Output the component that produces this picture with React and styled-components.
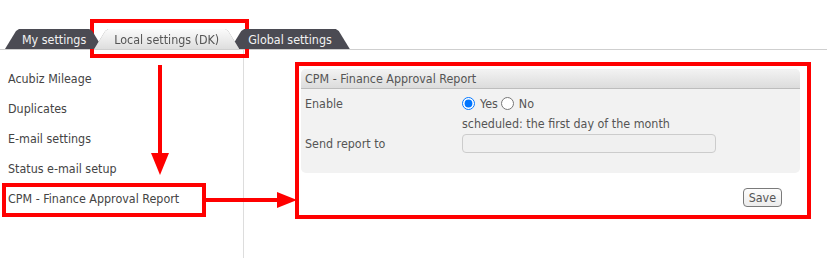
import React from "react";
import styled, { createGlobalStyle, css } from "styled-components";

const GlobalStyle = createGlobalStyle`
  body {
    margin: 0;
    background: #fff;
    font-family: "DejaVu Sans Condensed", "DejaVu Sans", Verdana, sans-serif;
    font-size: 12.4px;
    color: #444;
  }
`;

const Page = styled.div`
  position: relative;
  width: 827px;
  height: 258px;
  overflow: hidden;
`;

const TabStrip = styled.div`
  display: flex;
  padding: 29px 0 0 5px;
  border-bottom: 1px solid #cfcfcf;
`;

const Tab = styled.div`
  position: relative;
  height: 20px;
  line-height: 21px;
  padding: 0 ${(p) => p.$pad || 17}px;
  margin-left: -9px;
  color: #f2f2f2;
  white-space: nowrap;
  cursor: pointer;
  z-index: 1;

  &:first-child {
    margin-left: 0;
  }

  &::before {
    content: "";
    position: absolute;
    inset: 0;
    z-index: -1;
    background: #4b4b53;
    clip-path: polygon(0 100%, 11px 2px, 14px 0, calc(100% - 14px) 0, calc(100% - 11px) 2px, 100% 100%);
  }

  ${(p) =>
    p.$active &&
    css`
      z-index: 2;
      color: #555;
      filter: drop-shadow(0 0 0.6px #8a8a8a);
      &::before {
        background: linear-gradient(#fbfbfb, #dedede);
      }
    `}
`;

const Body = styled.div`
  display: grid;
  grid-template-columns: 244px 1fr;
  height: 208px;
`;

const Sidebar = styled.nav`
  border-right: 1px solid #dddddd;
  padding-top: 14px;
`;

const NavItem = styled.div`
  height: 30px;
  line-height: 30px;
  padding-left: 8px;
  color: #444;
  cursor: pointer;
`;

const Content = styled.div`
  padding: 19px 0 0 57px;
`;

const Panel = styled.div`
  width: 499px;
  background: #f2f2f2;
  border-radius: 5px;
  padding-bottom: 20px;
`;

const PanelHeader = styled.div`
  height: 19px;
  line-height: 20px;
  padding-left: 4px;
  border-bottom: 1px solid #bdbdbd;
  border-radius: 5px 5px 0 0;
  background: linear-gradient(#f3f3f3, #dcdcdc);
  color: #555;
`;

const PanelBody = styled.div`
  padding: 4px 0 0 4px;
`;

const Row = styled.div`
  display: grid;
  grid-template-columns: 157px 1fr;
  align-items: center;
  height: 20px;
  color: #555;
`;

const Options = styled.div`
  display: flex;
  align-items: center;
`;

const RadioLabel = styled.label`
  display: flex;
  align-items: center;
  gap: 5px;
  margin-right: 3px;
  color: #555;
`;

const Radio = styled.input`
  width: 13px;
  height: 13px;
  margin: 0;
`;

const TextField = styled.input`
  box-sizing: border-box;
  width: 254px;
  height: 19px;
  border: 1px solid #cccccc;
  border-radius: 4px;
  background: #f0f0f0;
`;

const Actions = styled.div`
  width: 499px;
  display: flex;
  justify-content: flex-end;
  padding-right: 18px;
  box-sizing: border-box;
  margin-top: 15px;
`;

const SaveButton = styled.button`
  height: 19px;
  padding: 0 5px;
  font-family: inherit;
  font-size: 12.4px;
  color: #555;
  background: linear-gradient(#fdfdfd, #ececec);
  border: 1px solid #7a7a7a;
  border-radius: 4px;
  line-height: 15px;
`;

const Overlay = styled.svg`
  position: absolute;
  top: 0;
  left: 0;
  pointer-events: none;
`;

const navItems = [
  "Acubiz Mileage",
  "Duplicates",
  "E-mail settings",
  "Status e-mail setup",
  "CPM - Finance Approval Report",
];

const Annotations = () => (
  <Overlay width="827" height="258" viewBox="0 0 827 258">
    <g fill="none" stroke="#ff0000" strokeWidth="4">
      <rect x="92" y="21" width="155" height="35" />
      <rect x="4" y="185" width="200" height="30" />
      <rect x="297" y="64" width="512" height="153" />
      <line x1="160" y1="65" x2="160" y2="155" />
      <line x1="206" y1="200" x2="279" y2="200" />
    </g>
    <g fill="#ff0000">
      <polygon points="151,153 169,153 160,175" />
      <polygon points="277,192 277,208 297,200" />
    </g>
  </Overlay>
);

const App = () => {
  return (
    <Page>
      <GlobalStyle />
      <TabStrip>
        <Tab>My settings</Tab>
        <Tab $active $pad={20}>Local settings (DK)</Tab>
        <Tab $pad={18}>Global settings</Tab>
      </TabStrip>
      <Body>
        <Sidebar>
          {navItems.map((item) => (
            <NavItem key={item}>{item}</NavItem>
          ))}
        </Sidebar>
        <Content>
          <Panel>
            <PanelHeader>CPM - Finance Approval Report</PanelHeader>
            <PanelBody>
              <Row>
                <span>Enable</span>
                <Options>
                  <RadioLabel>
                    <Radio type="radio" name="enable" defaultChecked />
                    Yes
                  </RadioLabel>
                  <RadioLabel>
                    <Radio type="radio" name="enable" />
                    No
                  </RadioLabel>
                </Options>
              </Row>
              <Row>
                <span />
                <span>scheduled: the first day of the month</span>
              </Row>
              <Row>
                <span>Send report to</span>
                <TextField type="text" />
              </Row>
            </PanelBody>
          </Panel>
          <Actions>
            <SaveButton>Save</SaveButton>
          </Actions>
        </Content>
      </Body>
      <Annotations />
    </Page>
  );
};

export default App;
